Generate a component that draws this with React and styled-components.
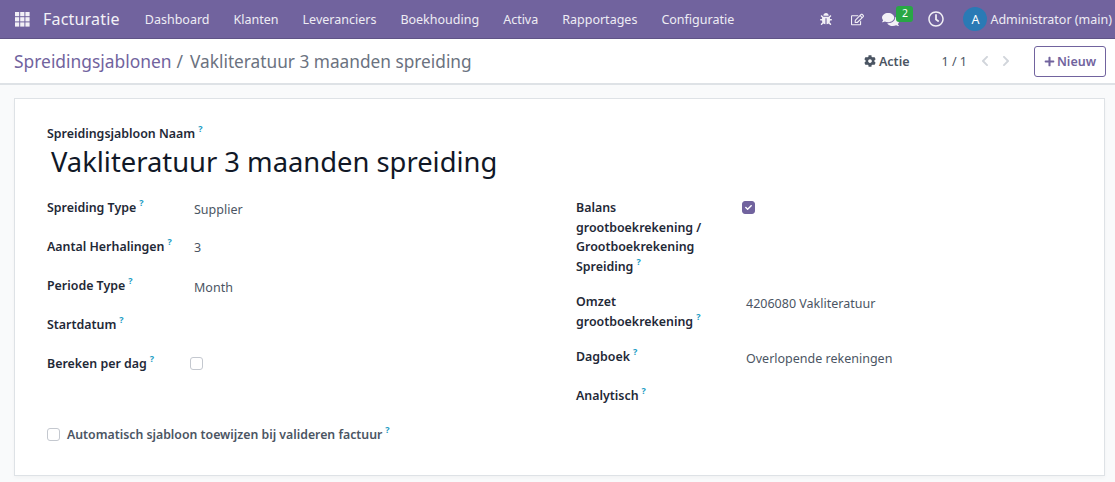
import React from "react";
import styled, { createGlobalStyle } from "styled-components";
import { FaBug, FaRegEdit, FaComments, FaRegClock, FaCog, FaPlus, FaChevronLeft, FaChevronRight, FaCheck } from "react-icons/fa";

const Global = createGlobalStyle`
  html, body { margin: 0; padding: 0; height: 100%; }
  body { background: #f9fafb; font-family: "Noto Sans", "Open Sans", sans-serif; font-size: 12.5px; color: #374151; overflow: hidden; }
  * { box-sizing: border-box; }
`;
const Page = styled.div`width: 1115px; height: 482px; display: flex; flex-direction: column; overflow: hidden;`;
const Nav = styled.header`height: 39px; flex: none; background: #71639e; border-bottom: 1px solid #5f5386; display: flex; align-items: center; color: #fff; padding-left: 15px;`;
const Brand = styled.span`font-size: 16px; margin-left: 13px; margin-right: 13px; color: #f3f1f7; letter-spacing: .2px;`;
const MenuItem = styled.span`font-size: 12.5px; padding: 0 12px; color: #eeecf4; white-space: nowrap;`;
const Spacer = styled.div`flex: 1;`;
const Tray = styled.div`display: flex; align-items: center; color: #f2f0f6;`;
const TrayIcon = styled.span`display: flex; position: relative; font-size: ${p => p.$size || 13}px; margin-right: ${p => p.$mr || 0}px;`;
const Badge = styled.span`position: absolute; left: 14px; top: -5px; width: 17px; height: 16px; background: #28a745; border-radius: 3px; color: #fff; font-size: 10.5px; line-height: 15px; text-align: center;`;
const Avatar = styled.span`width: 24px; height: 24px; border-radius: 50%; background: #2a7ab5; color: #fff; display: flex; align-items: center; justify-content: center; font-size: 12.5px; margin-right: 3px;`;
const UserName = styled.span`font-size: 12.5px; color: #eeecf4; margin-right: 3px; white-space: nowrap;`;
const Control = styled.div`height: 46px; flex: none; background: #fff; border-bottom: 2px solid #dee2e6; display: flex; align-items: center; padding: 0 9px 0 14px;`;
const Crumb = styled.span`font-size: ${p => p.$active ? 17.25 : 17.4}px; color: ${p => p.$active ? "#6b7280" : "#71639e"}; white-space: nowrap;`;
const Sep = styled.span`font-size: 17.5px; color: #6b7280; margin: 0 7px 0 5px;`;
const Action = styled.span`display: flex; align-items: center; gap: 3px; font-weight: 600; font-size: 12.5px; color: #4b5563; margin-right: 32px;`;
const Pager = styled.span`font-size: 12.5px; color: #4b5563; margin-right: 12px;`;
const Chevron = styled.span`display: flex; font-size: 12px; color: #d1d5db; margin-right: ${p => p.$mr}px;`;
const NewButton = styled.button`height: 31px; width: 72px; background: #fff; border: 1px solid #71639e; border-radius: 3px; color: #71639e; font: 600 12.5px "Noto Sans", sans-serif; display: flex; align-items: center; justify-content: center; gap: 2px; padding: 0;`;
const Content = styled.main`flex: 1; padding: 13px 10px 6px 14px;`;
const Sheet = styled.section`height: 378px; background: #fff; border: 1px solid #dee2e6; padding: 26px 32px 0 32px; box-shadow: 0 2px 4px rgba(0,0,0,.03);`;
const Help = styled.sup`color: #1b9cc4; font-size: 9px; font-weight: 700; margin-left: 3px; vertical-align: 6px; line-height: 0;`;
const NameLabel = styled.div`font-weight: 600; font-size: 12.4px; color: #1f2937; line-height: 17px;`;
const Title = styled.h1`margin: 2px 0 0 4px; font-size: 27.35px; line-height: 36px; font-weight: 400; color: #111827; white-space: nowrap;`;
const Columns = styled.div`display: grid; grid-template-columns: 529px 1fr; margin-top: 18px;`;
const Group = styled.div`display: flex; flex-direction: column;`;
const Row = styled.div`display: grid; grid-template-columns: ${p => p.$label}px 1fr; min-height: ${p => p.$h}px;`;
const Label = styled.div`font-weight: 600; font-size: 12.4px; line-height: 19.5px; color: #1f2937; width: ${p => p.$w ? p.$w + "px" : "auto"};`;
const Value = styled.div`font-size: 12.5px; line-height: 19.5px; color: #4b5563; padding-top: ${p => p.$pt || 0}px;`;
const Box = styled.span`width: 13px; height: 13px; border-radius: 3px; display: flex; align-items: center; justify-content: center; flex: none; border: 1px solid ${p => p.$on ? "#71639e" : "#c4c8cf"}; background: ${p => p.$on ? "#71639e" : "#fff"}; color: #fff; font-size: 7px; margin-top: ${p => p.$mt || 0}px; margin-left: ${p => p.$ml || 0}px;`;
const Auto = styled.div`display: flex; align-items: center; gap: 7px; margin-top: 19px; font-weight: 600; font-size: 12.3px; color: #4b5563; line-height: 20px;`;

const AppsIcon = () => (
  <svg width="15" height="15" viewBox="0 0 15 15" fill="#f2f0f6">
    {[0, 5.2, 10.4].flatMap(y => [0, 5.2, 10.4].map(x => <rect key={`${x}-${y}`} x={x} y={y} width="4.2" height="4.2" />))}
  </svg>
);
const Q = () => <Help>?</Help>;

export default function App() {
  return (
    <Page>
      <Global />
      <Nav>
        <AppsIcon />
        <Brand>Facturatie</Brand>
        {["Dashboard", "Klanten", "Leveranciers", "Boekhouding", "Activa", "Rapportages", "Configuratie"].map(m => <MenuItem key={m}>{m}</MenuItem>)}
        <Spacer />
        <Tray>
          <TrayIcon $size={12} $mr={19}><FaBug /></TrayIcon>
          <TrayIcon $size={13} $mr={18}><FaRegEdit /></TrayIcon>
          <TrayIcon $size={17} $mr={29}><FaComments /><Badge>2</Badge></TrayIcon>
          <TrayIcon $size={16} $mr={19}><FaRegClock /></TrayIcon>
          <Avatar>A</Avatar>
          <UserName>Administrator (main)</UserName>
        </Tray>
      </Nav>
      <Control>
        <Crumb>Spreidingsjablonen</Crumb><Sep>/</Sep><Crumb $active>Vakliteratuur 3 maanden spreiding</Crumb>
        <Spacer />
        <Action><FaCog size={12} />Actie</Action>
        <Pager>1 / 1</Pager>
        <Chevron $mr={9}><FaChevronLeft /></Chevron>
        <Chevron $mr={22}><FaChevronRight /></Chevron>
        <NewButton><FaPlus size={11} />Nieuw</NewButton>
      </Control>
      <Content>
        <Sheet>
          <NameLabel>Spreidingsjabloon Naam<Q /></NameLabel>
          <Title>Vakliteratuur 3 maanden spreiding</Title>
          <Columns>
            <Group>
              <Row $label={147} $h={39}><Label>Spreiding Type<Q /></Label><Value $pt={2}>Supplier</Value></Row>
              <Row $label={147} $h={39}><Label>Aantal Herhalingen<Q /></Label><Value $pt={1}>3</Value></Row>
              <Row $label={147} $h={39}><Label>Periode Type<Q /></Label><Value $pt={2}>Month</Value></Row>
              <Row $label={147} $h={39}><Label>Startdatum<Q /></Label><Value /></Row>
              <Row $label={147} $h={39}><Label>Bereken per dag<Q /></Label><Box $mt={3} $ml={-4} /></Row>
            </Group>
            <Group>
              <Row $label={166} $h={94}><Label $w={150}>Balans grootboekrekening / Grootboekrekening Spreiding<Q /></Label><Box $on $mt={3}><FaCheck /></Box></Row>
              <Row $label={170} $h={55}><Label $w={150}>Omzet grootboekrekening<Q /></Label><Value $pt={2}>4206080 Vakliteratuur</Value></Row>
              <Row $label={170} $h={39}><Label>Dagboek<Q /></Label><Value $pt={2}>Overlopende rekeningen</Value></Row>
              <Row $label={170} $h={19}><Label>Analytisch<Q /></Label><Value /></Row>
            </Group>
          </Columns>
          <Auto><Box /><span>Automatisch sjabloon toewijzen bij valideren factuur<Q /></span></Auto>
        </Sheet>
      </Content>
    </Page>
  );
}
